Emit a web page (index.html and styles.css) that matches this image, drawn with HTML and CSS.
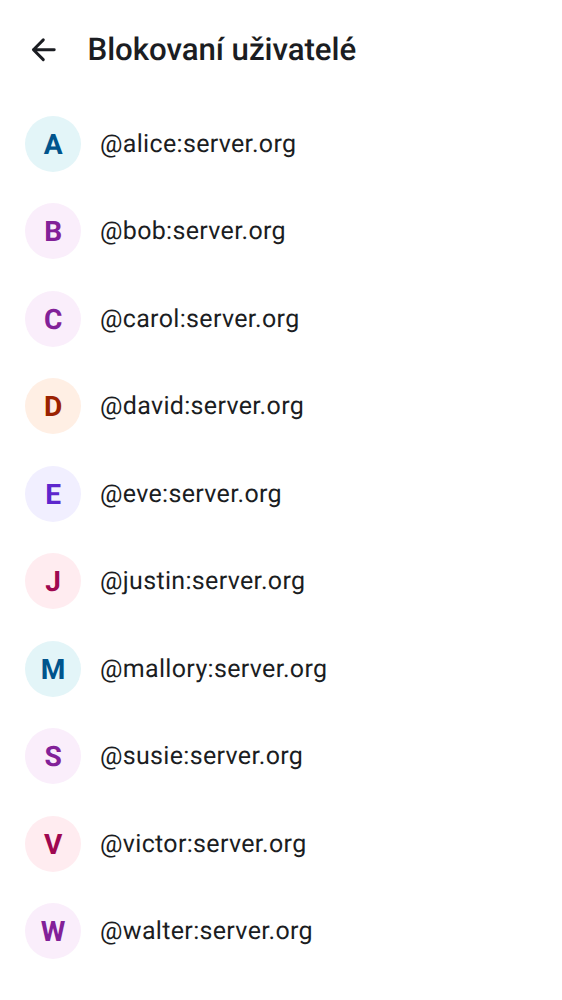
FILE: index.html
```
<!DOCTYPE html>
<html lang="cs">
<head>
<meta charset="utf-8">
<title>Blokovaní uživatelé</title>
<link rel="stylesheet" href="styles.css">
</head>
<body>
<header class="topbar">
<svg class="back" viewBox="0 0 24 24" aria-hidden="true"><path d="M11.7 5.7 5.4 12l6.3 6.3M5.4 12H18.7"/></svg>
<h1 class="title">Blokovaní uživatelé</h1>
</header>
<ul class="users">
<li class="user"><span class="avatar cyan">A</span><span class="name">@alice:server.org</span></li>
<li class="user"><span class="avatar fuchsia">B</span><span class="name">@bob:server.org</span></li>
<li class="user"><span class="avatar fuchsia">C</span><span class="name">@carol:server.org</span></li>
<li class="user"><span class="avatar orange">D</span><span class="name">@david:server.org</span></li>
<li class="user"><span class="avatar purple">E</span><span class="name">@eve:server.org</span></li>
<li class="user"><span class="avatar pink">J</span><span class="name">@justin:server.org</span></li>
<li class="user"><span class="avatar cyan">M</span><span class="name">@mallory:server.org</span></li>
<li class="user"><span class="avatar fuchsia">S</span><span class="name">@susie:server.org</span></li>
<li class="user"><span class="avatar pink">V</span><span class="name">@victor:server.org</span></li>
<li class="user"><span class="avatar fuchsia">W</span><span class="name">@walter:server.org</span></li>
</ul>
</body>
</html>
```

FILE: styles.css
```
body {
  margin: 0;
  background: #fff;
  color: #1b1d22;
  font-family: Roboto, sans-serif;
  text-rendering: geometricPrecision;
}
.topbar {
  display: flex;
  align-items: center;
  height: 100px;
  padding-left: 25px;
}
.back {
  width: 37.5px;
  height: 37.5px;
  margin-right: 25px;
  fill: none;
  stroke: #1b1d22;
  stroke-width: 1.9;
  stroke-linecap: round;
  stroke-linejoin: round;
}
.title {
  margin: 0;
  font-size: 31.25px;
  font-weight: 500;
  line-height: 44px;
  letter-spacing: -0.06px;
  white-space: nowrap;
}
.users {
  margin: 0;
  padding: 0;
  list-style: none;
}
.user {
  display: flex;
  align-items: center;
  gap: 18.75px;
  height: 87.5px;
  padding-left: 25px;
}
.avatar {
  flex: none;
  box-sizing: border-box;
  width: 56.25px;
  height: 56.25px;
  padding-top: 1px;
  border-radius: 50%;
  font-size: 28.125px;
  font-weight: 700;
  line-height: 56.25px;
  text-align: center;
}
.name {
  padding-top: 1px;
  font-size: 25px;
  line-height: 37.5px;
  letter-spacing: 0.33px;
}
.cyan { background: #e3f5f8; color: #00548c; }
.fuchsia { background: #faeefb; color: #822198; }
.orange { background: #ffefe4; color: #9b2200; }
.purple { background: #f1efff; color: #5d26cd; }
.pink { background: #ffecf0; color: #9f0850; }
```
